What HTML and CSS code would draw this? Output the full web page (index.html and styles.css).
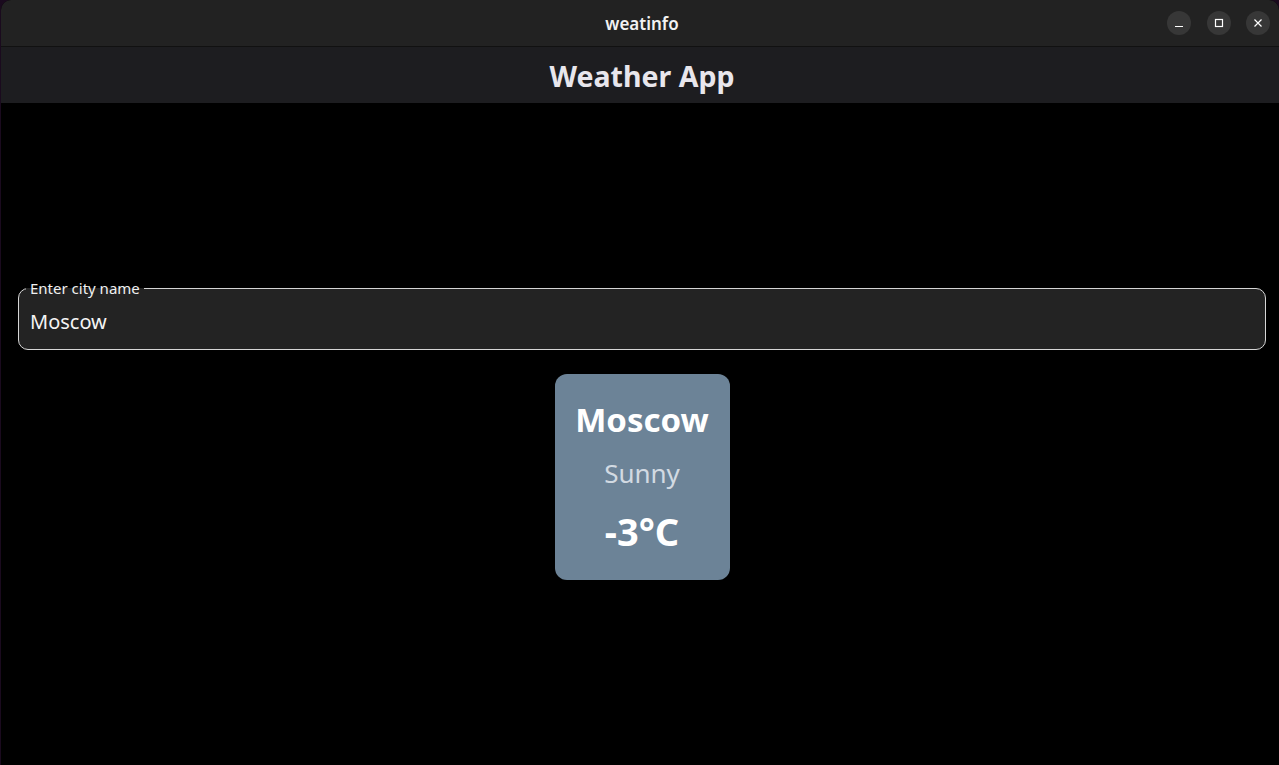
FILE: index.html
```html
<!DOCTYPE html>
<html>
<head>
<meta charset="utf-8">
<link rel="stylesheet" href="styles.css">
</head>
<body>
<div class="window">
  <div class="titlebar">
    <div class="title">weatinfo</div>
    <div class="controls">
      <span class="ctl"><svg width="10" height="10" viewBox="0 0 10 10"><path d="M1 8.5h8" stroke="#fff" stroke-width="1.2"/></svg></span>
      <span class="ctl"><svg width="10" height="10" viewBox="0 0 10 10"><rect x="1.5" y="1.5" width="7" height="7" fill="none" stroke="#fff" stroke-width="1.2"/></svg></span>
      <span class="ctl"><svg width="10" height="10" viewBox="0 0 10 10"><path d="M1.5 1.5l7 7M8.5 1.5l-7 7" stroke="#fff" stroke-width="1.2"/></svg></span>
    </div>
  </div>
  <div class="appbar">Weather App</div>
  <main class="content">
    <div class="field">
      <span class="label">Enter city name</span>
      <div class="value">Moscow</div>
    </div>
    <div class="card">
      <div class="city">Moscow</div>
      <div class="cond">Sunny</div>
      <div class="temp">-3°C</div>
    </div>
  </main>
</div>
</body>
</html>
```
FILE: styles.css
```css
* { box-sizing: border-box; }
html, body { margin: 0; height: 100%; background: #1a0a1e; }
body { font-family: "Noto Sans", "Open Sans", sans-serif; overflow: hidden; }
.window {
  margin-left: 1px;
  height: 765px;
  background: #000;
  border-radius: 10px 10px 0 0;
  overflow: hidden;
  display: flex;
  flex-direction: column;
}
.titlebar {
  height: 47px;
  background: #222222;
  border-bottom: 1px solid #111;
  display: flex;
  align-items: center;
  justify-content: center;
  position: relative;
}
.title { color: #f2f2f2; font-size: 17px; font-weight: 600; margin-left: 4px; }
.controls {
  position: absolute;
  right: 9px;
  top: 11px;
  display: flex;
  gap: 15px;
}
.ctl {
  width: 24px; height: 24px; border-radius: 50%;
  background: #373737;
  display: flex; align-items: center; justify-content: center;
}
.ctl:first-child { margin-right: 1px; }
.appbar {
  height: 56px;
  background: #1d1d20;
  color: #e8e6ec;
  font-size: 28.5px;
  font-weight: 700;
  display: flex;
  align-items: center;
  justify-content: center;
  padding: 1px 0 0 4px;
}
.content {
  padding: 185px 13px 0 17px;
  display: flex;
  flex-direction: column;
  align-items: center;
}
.field {
  position: relative;
  width: 100%;
  height: 62px;
  border: 1px solid #d6d6d6;
  border-radius: 10px;
  background: #232323;
  display: flex;
  align-items: center;
  padding: 4px 11px 0;
}
.label {
  position: absolute;
  left: 7px;
  top: -10px;
  padding: 0 4px;
  font-size: 15px;
  color: #f0f0f0;
  background: linear-gradient(#000 0 50%, #232323 50% 100%);
  line-height: 18px;
}
.value { color: #f4f4f4; font-size: 20px; }
.card {
  margin-top: 24px;
  width: 175px;
  height: 206px;
  background: #6c8397;
  border-radius: 12px;
  display: flex;
  flex-direction: column;
  align-items: center;
  padding-top: 24px;
}
.city { color: #fff; font-size: 33px; font-weight: 700; line-height: 44px; }
.cond { color: #d2dae2; font-size: 26px; line-height: 36px; margin-top: 13px; }
.temp { color: #fff; font-size: 38px; font-weight: 700; line-height: 50px; margin-top: 15px; }
```
